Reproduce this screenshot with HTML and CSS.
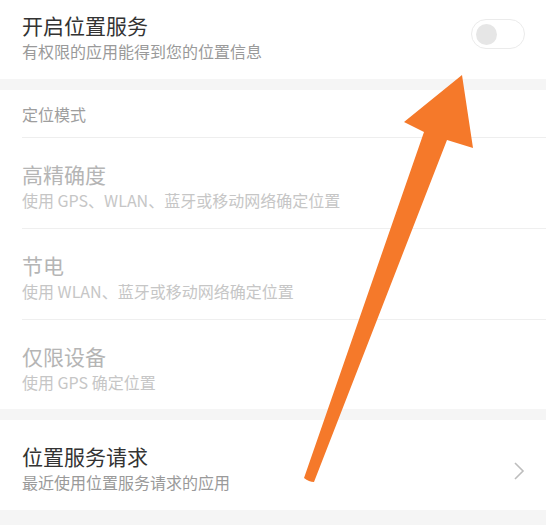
FILE: index.html
```html
<!DOCTYPE html>
<html lang="zh-CN">
<head>
<meta charset="utf-8">
<title>位置服务</title>
<link rel="stylesheet" href="styles.css">
</head>
<body>
<div class="page">
  <section class="row top">
    <div class="texts">
      <div class="title">开启位置服务</div>
      <div class="sub">有权限的应用能得到您的位置信息</div>
    </div>
    <div class="toggle"><span class="knob"></span></div>
  </section>
  <div class="band"></div>
  <section class="group">
    <div class="header">定位模式</div>
    <div class="row option disabled">
      <div class="texts">
        <div class="title">高精确度</div>
        <div class="sub">使用 GPS、WLAN、蓝牙或移动网络确定位置</div>
      </div>
    </div>
    <div class="row option disabled">
      <div class="texts">
        <div class="title">节电</div>
        <div class="sub">使用 WLAN、蓝牙或移动网络确定位置</div>
      </div>
    </div>
    <div class="row option disabled last">
      <div class="texts">
        <div class="title">仅限设备</div>
        <div class="sub">使用 GPS 确定位置</div>
      </div>
    </div>
  </section>
  <div class="band"></div>
  <section class="row link">
    <div class="texts">
      <div class="title">位置服务请求</div>
      <div class="sub">最近使用位置服务请求的应用</div>
    </div>
    <svg class="chev" width="12" height="20" viewBox="0 0 12 20"><path d="M2 2 L10 10 L2 18" fill="none" stroke="#bdbdbd" stroke-width="1.6"/></svg>
  </section>
  <div class="band bottom"></div>
  <svg class="arrow" width="546" height="525" viewBox="0 0 546 525">
    <path d="M462 75 L473 148 L447 140 L314 482 Q309 482 304 478 L424 132 L404 122 Z" fill="#f5792a"/>
  </svg>
</div>
</body>
</html>
```
FILE: styles.css
```css
* { box-sizing: border-box; }
html, body { margin: 0; padding: 0; background: #fff; }
body {
  font-family: "Noto Sans CJK SC", "Noto Sans", sans-serif;
  width: 546px;
  height: 525px;
  overflow: hidden;
}
.page { position: relative; width: 546px; height: 525px; }
.row {
  display: flex;
  align-items: center;
  justify-content: space-between;
  padding-left: 22px;
  padding-right: 22px;
}
.title {
  font-size: 21px;
  line-height: 26px;
  color: #333;
}
.sub {
  font-size: 16px;
  line-height: 20px;
  color: #9a9a9a;
  margin-top: 3px;
}
.top { height: 79px; padding-top: 12px; padding-bottom: 18px; align-items: flex-start; }
.toggle {
  width: 54px;
  height: 30px;
  margin-top: 7px;
  margin-right: -1px;
  border: 1.5px solid #ebebeb;
  border-radius: 15px;
  display: flex;
  align-items: center;
  padding-left: 4px;
}
.knob {
  width: 21px;
  height: 21px;
  border-radius: 50%;
  background: #e6e6e6;
}
.band { height: 11px; background: #f5f5f5; }
.band.bottom { height: 17px; }
.header {
  height: 48px;
  margin-left: 22px;
  padding-top: 14px;
  font-size: 16px;
  line-height: 20px;
  color: #9e9e9e;
  border-bottom: 1px solid #eeeeee;
}
.option {
  height: 91px;
  padding-top: 23px;
  align-items: flex-start;
  margin-left: 22px;
  padding-left: 0;
  border-bottom: 1px solid #efefef;
}
.option.last { height: 89px; border-bottom: none; }
.disabled .title { color: #b5b5b5; }
.disabled .sub { color: #c6c6c6; }
.link { height: 90px; padding-top: 4px; }
.chev { margin-right: -1px; margin-top: 8px; }
.arrow { position: absolute; left: 0; top: 0; pointer-events: none; }
```
